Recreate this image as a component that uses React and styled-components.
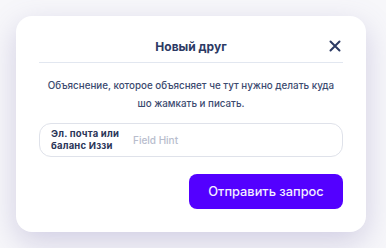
import styled, { createGlobalStyle } from "styled-components";

const GlobalStyle = createGlobalStyle`
  html, body {
    margin: 0;
    padding: 0;
    background: #f7f7fa;
    font-family: Inter, "Noto Sans", sans-serif;
  }
`;

const Page = styled.div`
  width: 386px;
  height: 248px;
  padding: 16px;
  box-sizing: border-box;
`;

const Card = styled.div`
  width: 350px;
  height: 216px;
  box-sizing: border-box;
  background: #fff;
  border-radius: 16px;
  box-shadow: 0 10px 30px rgba(110, 100, 170, 0.28);
  padding: 20px 23px 23px;
  display: flex;
  flex-direction: column;
`;

const Header = styled.div`
  position: relative;
  height: 20px;
  padding-bottom: 6px;
  border-bottom: 1px solid #e2e7f0;
  display: flex;
  align-items: center;
  justify-content: center;
`;

const Title = styled.div`
  font-size: 12px;
  font-weight: 700;
  color: #2c3a64;
`;

const Close = styled.button`
  position: absolute;
  right: 2px;
  top: 4px;
  border: 0;
  background: none;
  padding: 0;
  width: 12px;
  height: 12px;
  display: flex;
  cursor: pointer;
`;

const Description = styled.p`
  margin: 14px 0 0;
  font-size: 9.8px;
  line-height: 18px;
  font-weight: 500;
  color: #3b4a6f;
  text-align: center;
`;

const Field = styled.div`
  margin-top: 10px;
  height: 34px;
  box-sizing: border-box;
  border: 1px solid #dfe2ea;
  border-radius: 12px;
  display: flex;
  align-items: center;
  padding: 0 11px;
  gap: 10px;
`;

const Label = styled.div`
  font-size: 9.5px;
  line-height: 12px;
  font-weight: 700;
  letter-spacing: 0.2px;
  color: #2a3558;
  width: 72px;
`;

const Hint = styled.input`
  border: 0;
  outline: none;
  flex: 1;
  font: inherit;
  font-size: 10px;
  font-weight: 500;
  color: #2a3558;
  padding: 0;
  &::placeholder {
    color: #b8bdcd;
  }
`;

const Actions = styled.div`
  margin-top: 17px;
  display: flex;
  justify-content: flex-end;
`;

const Button = styled.button`
  width: 154px;
  height: 35px;
  border: 0;
  border-radius: 8px;
  background: #5300ff;
  color: #f4efff;
  font-family: inherit;
  font-size: 12.8px;
  font-weight: 500;
  cursor: pointer;
`;

function App() {
  return (
    <Page>
      <GlobalStyle />
      <Card>
        <Header>
          <Title>Новый друг</Title>
          <Close aria-label="Закрыть">
            <svg width="12" height="12" viewBox="0 0 12 12">
              <path
                d="M1.5 1.5l9 9M10.5 1.5l-9 9"
                stroke="#2c3a64"
                strokeWidth="2"
                strokeLinecap="round"
              />
            </svg>
          </Close>
        </Header>
        <Description>
          Объяснение, которое объясняет че тут нужно делать куда
          <br />
          шо жамкать и писать.
        </Description>
        <Field>
          <Label>
            Эл. почта или
            <br />
            баланс Иззи
          </Label>
          <Hint placeholder="Field Hint" />
        </Field>
        <Actions>
          <Button>Отправить запрос</Button>
        </Actions>
      </Card>
    </Page>
  );
}

export default App;
